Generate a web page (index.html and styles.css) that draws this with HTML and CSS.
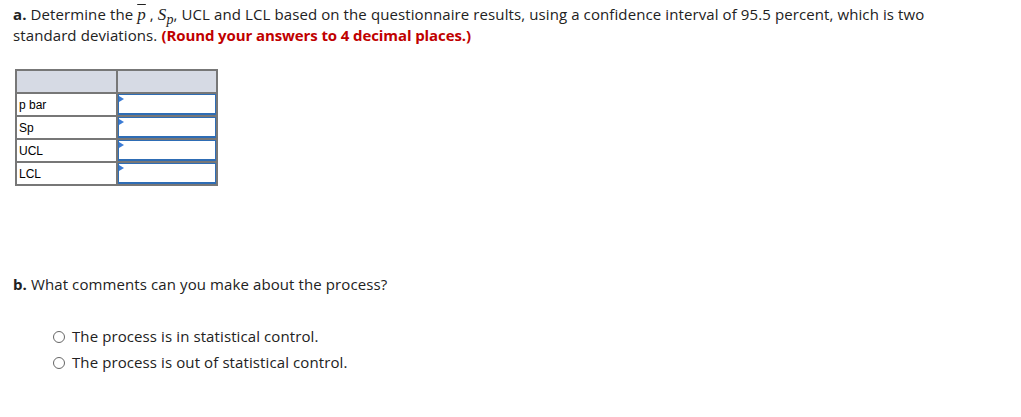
FILE: index.html
```html
<!DOCTYPE html>
<html>
<head>
<meta charset="utf-8">
<link rel="stylesheet" href="styles.css">
</head>
<body>
<div class="page">
  <p class="q">
    <b>a.</b> Determine the <span class="pbar"><i>p</i></span> , <i class="sp">S<sub>p</sub></i>, <span>UCL and LCL based on the questionnaire results, using a confidence interval of 95.5 percent, which is two</span> <span>standard deviations.</span> <b class="red">(Round your answers to 4 decimal places.)</b>
  </p>
  <table class="grid">
    <tr class="head"><td class="lab"></td><td class="val"></td></tr>
    <tr><td class="lab">p bar</td><td class="val"><div class="inp"><span class="flag"></span></div></td></tr>
    <tr><td class="lab">Sp</td><td class="val"><div class="inp"><span class="flag"></span></div></td></tr>
    <tr><td class="lab">UCL</td><td class="val"><div class="inp"><span class="flag"></span></div></td></tr>
    <tr><td class="lab">LCL</td><td class="val"><div class="inp"><span class="flag"></span></div></td></tr>
  </table>
  <p class="q qb"><b>b.</b> What comments can you make about the process?</p>
  <div class="opts">
    <label class="opt"><span class="radio"></span>The process is in statistical control.</label>
    <label class="opt"><span class="radio"></span>The process is out of statistical control.</label>
  </div>
</div>
</body>
</html>
```
FILE: styles.css
```css
html, body { margin: 0; padding: 0; background: #fff; }
.page {
  padding: 4px 0 0 13px;
  font-family: "Open Sans", "Lato", sans-serif;
  font-size: 15px;
  letter-spacing: 0.1px;
  color: #222;
}
.q { margin: 0; line-height: 21px; width: 940px; }
.q b { font-weight: 700; }
.red { color: #c00000; letter-spacing: -0.1px; }
.pbar i, .sp { font-family: "Liberation Serif", serif; font-size: 17px; line-height: 1; }
.pbar { text-decoration: overline; }
.sp sub { font-size: 14px; vertical-align: -4px; line-height: 0; }
.grid {
  margin: 23px 0 0 2px;
  border-collapse: collapse;
  font-family: "Liberation Sans", Arial, sans-serif;
  font-size: 12px;
  letter-spacing: 0;
  color: #000;
}
.grid tr { height: 23px; }
.grid td { border: 2px solid #777; padding: 0; }
.grid .head td { background: #d6dae4; }
.lab { width: 97px; padding-left: 2px !important; }
.val { width: 98px; vertical-align: top; }
.inp {
  position: relative;
  height: 21px;
  border: 2px solid #2e6db5;
  border-width: 1px 1px 2px 1px;
  box-sizing: border-box;
}
.flag {
  position: absolute; left: 0; top: 1px;
  width: 0; height: 0;
  border-top: 3px solid transparent;
  border-bottom: 3px solid transparent;
  border-left: 5px solid #3a7bd5;
}
.qb { margin-top: 88px; }
.opts { margin: 31px 0 0 40px; display: flex; flex-direction: column; gap: 5px; }
.opt { display: flex; align-items: center; line-height: 21px; }
.radio {
  width: 12px; height: 12px; border: 1px solid #666; border-radius: 50%;
  margin-right: 7px; box-sizing: border-box;
}
```
